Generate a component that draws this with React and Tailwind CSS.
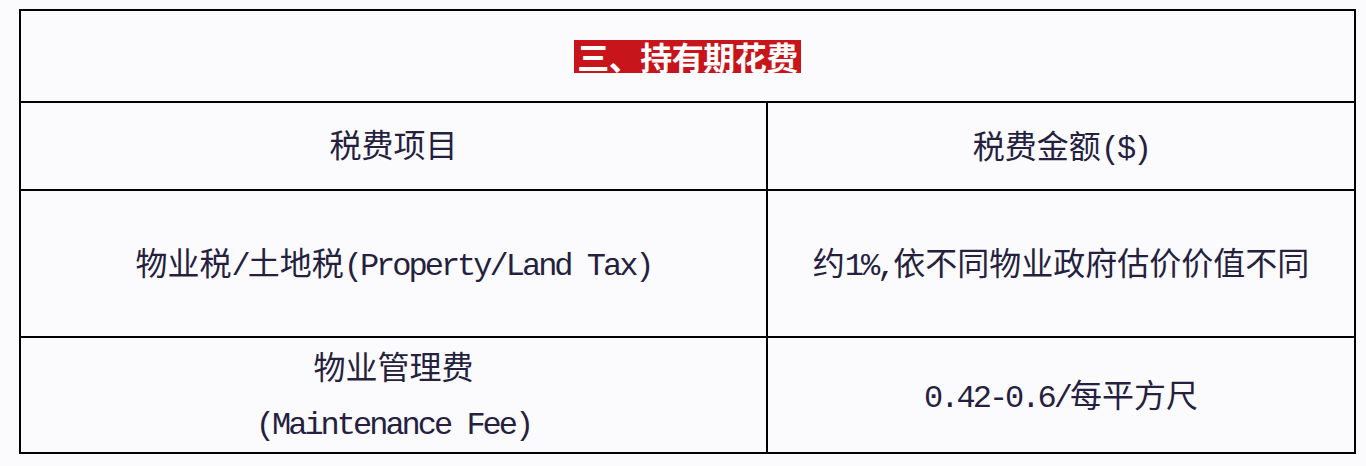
const mono = { fontFamily: '"Liberation Mono", "Noto Sans CJK SC", monospace' };

const Latin = ({ children }) => (
  <span className="tracking-[-3px]">{children}</span>
);

const Row = ({ left, right, height, last }) => (
  <div className={`flex ${height} ${last ? '' : 'border-b-2 border-black'}`}>
    <div className="w-[747px] border-r-2 border-black flex flex-col items-center justify-center text-center pt-[6px]">
      {left}
    </div>
    <div className="flex-1 flex flex-col items-center justify-center text-center pt-[7px]">
      {right}
    </div>
  </div>
);

const App = () => {
  return (
    <div className="w-[1366px] h-[466px] bg-[#fbfbfd] pt-[9px] pl-[19px]">
      <div
        className="w-[1337px] border-2 border-black text-[32px] leading-[40px] text-[#261f40]"
        style={mono}
      >
        <div className="h-[92px] border-b-2 border-black flex items-center justify-center">
          <span
            className="bg-[#c8141b] text-white font-bold text-[32px] leading-[33px] px-[3px] tracking-[-0.5px]"
            style={{ fontFamily: '"Noto Sans CJK SC", sans-serif' }}
          >
            三、持有期花费
          </span>
        </div>

        <Row
          height="h-[88px]"
          left={<span>税费项目</span>}
          right={
            <span>
              税费金额<Latin>($)</Latin>
            </span>
          }
        />

        <Row
          height="h-[147px]"
          left={
            <span>
              物业税<Latin>/</Latin>土地税<Latin>(Property/Land Tax)</Latin>
            </span>
          }
          right={
            <span>
              约<Latin>1%,</Latin>依不同物业政府估价价值不同
            </span>
          }
        />

        <Row
          height="h-[114px]"
          last
          left={
            <div className="leading-[55px]">
              <div>物业管理费</div>
              <div>
                <Latin>(Maintenance Fee)</Latin>
              </div>
            </div>
          }
          right={
            <span>
              <Latin>0.42-0.6/</Latin>每平方尺
            </span>
          }
        />
      </div>
    </div>
  );
};

export default App;
